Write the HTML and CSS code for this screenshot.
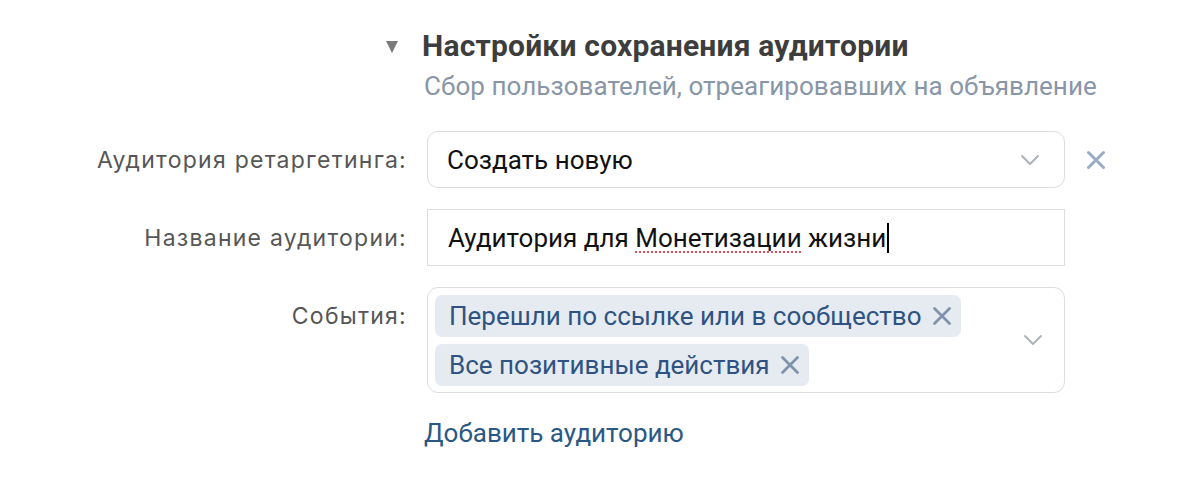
FILE: index.html
```html
<!DOCTYPE html>
<html lang="ru">
<head>
<meta charset="utf-8">
<link rel="stylesheet" href="styles.css">
</head>
<body>
<div class="page">
  <div class="section-head">
    <span class="caret"></span>
    <div class="head-text">
      <div class="title">Настройки сохранения аудитории</div>
      <div class="subtitle">Сбор пользователей, отреагировавших на объявление</div>
    </div>
  </div>
  <div class="form">
    <div class="label">Аудитория ретаргетинга:</div>
    <div class="field select">
      <span class="value">Создать новую</span>
      <svg class="chev" width="20" height="12" viewBox="0 0 20 12"><path d="M2 2 L10 10 L18 2" fill="none" stroke="#aeb3b9" stroke-width="2" stroke-linecap="round" stroke-linejoin="round"/></svg>
    </div>
    <svg class="remove" width="20" height="20" viewBox="0 0 20 20"><path d="M2.5 2.5 L17.5 17.5 M17.5 2.5 L2.5 17.5" stroke="#98adc4" stroke-width="3" stroke-linecap="round"/></svg>

    <div class="label">Название аудитории:</div>
    <div class="field input">
      <span class="value">Аудитория для <span class="typo">Монетизации</span> жизни</span><span class="cursor"></span>
    </div>
    <div></div>

    <div class="label">События:</div>
    <div class="field multi">
      <div class="chips">
        <span class="chip">Перешли по ссылке или в сообщество<svg class="chip-x" width="20" height="20" viewBox="0 0 20 20"><path d="M2.5 2.5 L17.5 17.5 M17.5 2.5 L2.5 17.5" stroke="#7f93ab" stroke-width="2.8" stroke-linecap="round"/></svg></span>
        <span class="chip">Все позитивные действия<svg class="chip-x" width="20" height="20" viewBox="0 0 20 20"><path d="M2.5 2.5 L17.5 17.5 M17.5 2.5 L2.5 17.5" stroke="#7f93ab" stroke-width="2.8" stroke-linecap="round"/></svg></span>
      </div>
      <svg class="chev" width="20" height="12" viewBox="0 0 20 12"><path d="M2 2 L10 10 L18 2" fill="none" stroke="#aeb3b9" stroke-width="2" stroke-linecap="round" stroke-linejoin="round"/></svg>
    </div>
    <div></div>

    <div></div>
    <a class="add-link" href="#">Добавить аудиторию</a>
    <div></div>
  </div>
</div>
</body>
</html>
```
FILE: styles.css
```css
html, body {
  margin: 0;
  padding: 0;
  background: #ffffff;
}
.page {
  width: 1200px;
  height: 484px;
  font-family: Roboto, "Liberation Sans", sans-serif;
  color: #000;
}
.section-head {
  display: flex;
  align-items: flex-start;
  padding: 28px 0 0 386px;
}
.caret {
  width: 0;
  height: 0;
  margin-top: 13px;
  border-left: 6px solid transparent;
  border-right: 6px solid transparent;
  border-top: 12px solid #7a7a7a;
}
.head-text {
  margin-left: 24px;
}
.title {
  font-size: 30px;
  font-weight: 700;
  color: #3d3d3d;
  line-height: 36px;
  letter-spacing: 0.2px;
}
.subtitle {
  font-size: 26px;
  color: #8896a8;
  line-height: 32px;
  margin-top: 6px;
  margin-left: 2px;
  letter-spacing: 0.05px;
}
.form {
  display: grid;
  grid-template-columns: 406px 638px 60px;
  column-gap: 21px;
  row-gap: 21px;
  margin-top: 29px;
}
.label {
  font-family: Inter, "Liberation Sans", sans-serif;
  font-size: 23px;
  letter-spacing: 1.25px;
  color: #565656;
  height: 57px;
  display: flex;
  align-items: center;
  justify-content: flex-end;
  margin-right: -1px;
}
.field {
  box-sizing: border-box;
  border: 1px solid #dcdde0;
  display: flex;
  align-items: center;
  font-size: 26px;
}
.select {
  height: 57px;
  border-radius: 11px;
  padding: 0 24px 0 19px;
  justify-content: space-between;
}
.input {
  height: 57px;
  padding: 0 20px;
}
.value {
  color: #111;
}
.typo {
  text-decoration: underline dotted #e0505a;
  text-underline-offset: 5px;
  text-decoration-thickness: 2px;
}
.cursor {
  display: inline-block;
  width: 2px;
  height: 30px;
  background: #000;
  margin-left: 1px;
}
.remove {
  align-self: center;
}
.multi {
  height: 106px;
  border-radius: 11px;
  padding: 7px 21px 7px 7px;
  justify-content: space-between;
  align-items: center;
}
.chips {
  display: flex;
  flex-direction: column;
  align-items: flex-start;
  gap: 7px;
}
.chip {
  display: inline-flex;
  align-items: center;
  height: 42px;
  box-sizing: border-box;
  padding: 0 9px 0 14px;
  background: #e5ebf1;
  border-radius: 7px;
  color: #2e5382;
  font-size: 26px;
}
.chip-x {
  margin-left: 10px;
}
.add-link {
  font-size: 26px;
  color: #2a5885;
  text-decoration: none;
  margin-left: -3px;
  margin-top: 3px;
  line-height: 32px;
  justify-self: start;
}
```
